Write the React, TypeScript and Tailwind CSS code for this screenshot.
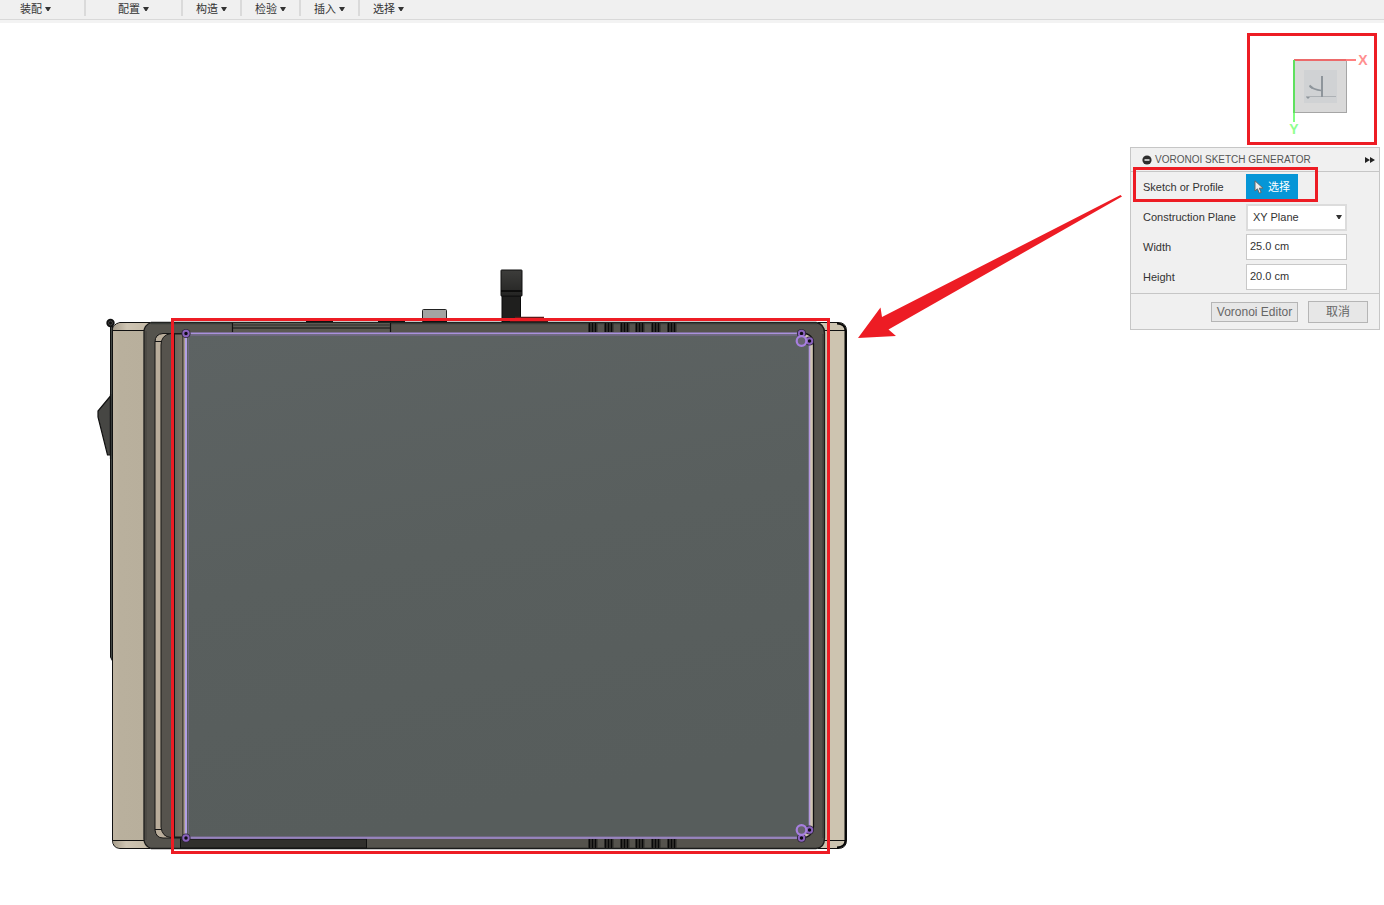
import React from "react";

const menus = [
  { label: "装配", box: "w-[86px] justify-start pl-5" },
  { label: "配置", box: "w-[97px] justify-center" },
  { label: "构造", box: "w-[59px] justify-center" },
  { label: "检验", box: "w-[59px] justify-center" },
  { label: "插入", box: "w-[59px] justify-center" },
  { label: "选择", box: "w-[59px] justify-center border-transparent!" },
];

const ventX = [588, 604, 620, 635, 651, 667];

function Caret() {
  return (
    <svg width="6" height="4" viewBox="0 0 6 4" aria-hidden="true">
      <path d="M0 0H6L3.6 4H2.4Z" fill="#333" />
    </svg>
  );
}

function Toolbar() {
  return (
    <header className="border-b-3 border-[#f3f3f3] bg-[#f0f0f0]">
      <nav className="flex h-5 items-start border-b border-[#d9d9d9]">
        {menus.map((m) => (
          <button
            key={m.label}
            className={`flex h-4 items-center gap-[3px] border-r-2 border-[#dadada] pt-0.5 text-[11px] leading-4 text-[#333] ${m.box}`}
          >
            {m.label}
            <Caret />
          </button>
        ))}
      </nav>
    </header>
  );
}

function Vents({ y, height }: { y: number; height: number }) {
  return (
    <g>
      {ventX.map((x) => (
        <g key={x}>
          <rect x={x} y={y} width="9.5" height={height} fill="#2d2c29" />
          <path
            d={`M${x + 1.5} ${y}v${height}M${x + 4.5} ${y}v${height}M${x + 7.5} ${y}v${height}`}
            stroke="#090909"
            strokeWidth="1"
          />
        </g>
      ))}
    </g>
  );
}

function Joint({ x, y }: { x: number; y: number }) {
  return (
    <g>
      <circle cx={x} cy={y} r="4.6" fill="#2f2739" />
      <circle cx={x} cy={y} r="2.7" fill="#0f0b14" stroke="#8a62bd" strokeWidth="1.9" />
    </g>
  );
}

function Model() {
  return (
    <svg
      className="block shrink-0"
      width="1130"
      height="882"
      viewBox="0 23 1130 882"
      role="img"
      aria-label="Model view"
    >
      <defs>
        <linearGradient id="face" x1="0" y1="0" x2="0.25" y2="1">
          <stop offset="0" stopColor="#5d6363" />
          <stop offset="0.5" stopColor="#595f5e" />
          <stop offset="1" stopColor="#575d5c" />
        </linearGradient>
        <linearGradient id="side">
          <stop offset="0" stopColor="#c0b5a2" />
          <stop offset="0.2" stopColor="#b9b09d" />
          <stop offset="1" stopColor="#b8af9c" />
        </linearGradient>
        <linearGradient id="cap">
          <stop offset="0" stopColor="#a89e8c" />
          <stop offset="0.4" stopColor="#cfc5b3" />
          <stop offset="1" stopColor="#c5bba8" />
        </linearGradient>
        <linearGradient id="rail">
          <stop offset="0" stopColor="#6b655b" />
          <stop offset="1" stopColor="#7b7367" />
        </linearGradient>
        <linearGradient id="plug" x1="0" y1="0" x2="0" y2="1">
          <stop offset="0" stopColor="#3d3d3b" />
          <stop offset="1" stopColor="#242423" />
        </linearGradient>
      </defs>

      {/* rear plate and knob */}
      <path d="M110.5 326V657l2 4V326Z" fill="#444946" stroke="#111" />
      <path d="M110.5 396L98 411v6l9.5 38h3Z" fill="#464643" stroke="#111" strokeWidth="1.2" />
      <path d="M110.5 394V459" stroke="#111" strokeWidth="1.2" />

      {/* connectors on the upper edge */}
      <rect x="422.5" y="309.5" width="24" height="13" rx="1" fill="#a3a4a2" stroke="#222" />
      <path d="M423 321.5h24" stroke="#111" strokeWidth="2" />
      <rect x="502" y="296" width="18.5" height="26" fill="#1f1f1e" stroke="#0a0a0a" />
      <rect x="501" y="270" width="21" height="26" rx="0.5" fill="url(#plug)" stroke="#111" />
      <path d="M501 291h21" stroke="#050505" strokeWidth="1.5" />
      <path d="M515 317.5h29M510 321.5h38" stroke="#5e1a1a" strokeWidth="1.5" />
      <path d="M306 321.5h27M378 321.5h27" stroke="#111" strokeWidth="2" />

      {/* side shells */}
      <path d="M150 322.5H120Q112.5 324 112.5 331V840Q112.5 848 120 848.5H150Z" fill="url(#side)" stroke="#111" />
      <path d="M148 323H120Q113 325 113 330H146Z" fill="url(#cap)" />
      <path d="M113 841H146V848H121Q114 847 113 841Z" fill="url(#cap)" />
      <path d="M113 330.5H144M113 840.5H144" stroke="#111" />
      <circle cx="110.5" cy="323" r="4.2" fill="#111" />
      <circle cx="110.5" cy="323" r="2" fill="none" stroke="#4a4a4a" strokeWidth="0.8" />
      <path d="M818 322.5H838Q846.5 322.5 846.5 331V840Q846.5 848.5 838 848.5H818Z" fill="#cdc4b0" stroke="#111" />
      <path d="M824 330.5H846M824 840.5H846" stroke="#111" />
      <path d="M837 323.5Q845.5 324 845.5 331V840Q845.5 847 837 847.5" fill="none" stroke="#080808" strokeWidth="2" />

      {/* frame */}
      <path
        d="M151 322.5H816Q824.5 324 824.5 333V838Q824.5 848 816 848.5H151Q144 846 144 839V332Q144 325 151 322.5Z"
        fill="#55534d"
        stroke="#1b1b1a"
        strokeWidth="1.3"
      />
      <path d="M151 323.5H817" stroke="#3b3d3a" strokeWidth="1.5" />
      <path d="M146 331V840" stroke="#44433f" />
      <path d="M823 334V838" stroke="#3d3c38" />

      {/* left recess */}
      <path d="M186 333.5H163Q155 334 155 342V830Q156 838 163 838H186Z" fill="#b9ad9b" stroke="#151515" />
      <path d="M155 341.5H161M155 829.5H161" stroke="#151515" />
      <path d="M183 333.5H171Q161 335 161 345V827Q162 837 171 837.5H183Z" fill="#56534d" stroke="#181817" />
      <rect x="174.5" y="334" width="8.5" height="503" fill="url(#rail)" stroke="#181817" />
      <rect x="183.5" y="334" width="2.5" height="504" fill="#a69a89" />

      {/* upper and lower slots */}
      <rect x="232.5" y="323" width="158" height="9" fill="#5b5952" />
      <path d="M232.5 323V332M390.5 323V332M233 328H390" stroke="#111" strokeWidth="1.2" />
      <path d="M233 325H390" stroke="#44433e" strokeWidth="2" />
      <rect x="180.5" y="839" width="186" height="9" fill="#31302d" stroke="#111" />
      <Vents y={323} height={9} />
      <Vents y={839} height={9} />

      {/* selected profile */}
      <path d="M801 333Q813 333 813.5 344V827Q812 838 801 838Z" fill="#cfc4b2" stroke="#111" strokeWidth="1.3" />
      <path d="M186 333.5H801Q803 341 809 341V830Q802 830 801 838H186Z" fill="url(#face)" />
      <path d="M186 332.5H801M188.5 335V836M188 335.5H797M188 836.5H797" stroke="#6e6680" strokeWidth="1" fill="none" />
      <path d="M186 838H801M186 333.5H801" stroke="#aa91db" strokeWidth="1.6" />
      <path d="M186 334V838" stroke="#b3a0e6" strokeWidth="2" />
      <path d="M809.5 342V830" stroke="#b397df" strokeWidth="1.6" />

      <Joint x={186} y={333.5} />
      <Joint x={186} y={838} />
      <Joint x={801.5} y={333.5} />
      <Joint x={809.5} y={341} />
      <Joint x={809.5} y={830} />
      <Joint x={801.5} y={838} />
      <circle cx="801.5" cy="341" r="4.8" fill="#676370" stroke="#a77fe0" strokeWidth="2.2" />
      <circle cx="801.5" cy="830" r="4.8" fill="#676370" stroke="#a77fe0" strokeWidth="2.2" />

      {/* callouts */}
      <rect x="172.5" y="319.5" width="656" height="533" fill="none" stroke="#ed1c24" strokeWidth="3" />
      <path d="M858 338L880.5 307.5L882 317L1120.5 195L1122 196.5L888.5 329.5L896 336Z" fill="#ed1c24" />
    </svg>
  );
}

function ViewCube() {
  return (
    <div className="mr-[3px] border-3 border-[#ed1c24]">
      <svg
        className="block text-[14px] font-bold"
        width="124"
        height="106"
        viewBox="1250 36 124 106"
        role="img"
        aria-label="View cube"
      >
        <rect x="1294.5" y="60.5" width="52" height="52" fill="#d9d9d9" stroke="#a5a5a5" />
        <rect x="1304" y="70" width="33" height="33" fill="#d0d2d4" />
        <path d="M1306 96.5H1336" stroke="#adb1b5" />
        <path d="M1322 76V97" stroke="#8e959b" strokeWidth="2" />
        <path d="M1310 86.5Q1314 89.5 1321 90.5" fill="none" stroke="#8e959b" strokeWidth="1.6" />
        <path d="M1309.5 85.5l3 2.5" stroke="#8e959b" strokeWidth="2" />
        <path d="M1306 97h4l-2 2Z" fill="#8e959b" />
        <path d="M1294 60H1346" stroke="#ec6a6a" strokeWidth="2" />
        <path d="M1346 60H1356" stroke="#ff8080" strokeWidth="2" />
        <path d="M1294 60V113" stroke="#5fe05f" strokeWidth="2" />
        <path d="M1294 113V122" stroke="#80ff80" strokeWidth="2" />
        <text x="1363" y="65" textAnchor="middle" fill="#ff8f8f" fontFamily="Liberation Sans Narrow, Liberation Sans, sans-serif">
          X
        </text>
        <text x="1294" y="134" textAnchor="middle" fill="#90ff90" fontFamily="Liberation Sans Narrow, Liberation Sans, sans-serif">
          Y
        </text>
      </svg>
    </div>
  );
}

function Field({ id, label, children }: { id: string; label: string; children: React.ReactNode }) {
  return (
    <div className="flex h-[30px] items-center">
      <label htmlFor={id} className="w-[103px] shrink-0">
        {label}
      </label>
      {children}
    </div>
  );
}

function GeneratorPanel() {
  const input = "h-[26px] w-[101px] border border-[#c8c8c8] bg-white px-[3px] pb-0.5 text-[11px] text-[#333] outline-none";
  return (
    <section className="w-[250px] border border-[#c6c6c6] bg-[#f0f0f0] text-[11px] text-[#333]">
      <div className="flex h-6 items-center border-b border-[#c6c6c6] pr-1 pl-[11px]">
        <button aria-label="Collapse" className="mr-[3px]">
          <svg className="block" width="10" height="10" viewBox="0 0 10 10">
            <circle cx="5" cy="5" r="4.6" fill="#2e2e2e" />
            <path d="M2.5 5h5" stroke="#fff" strokeWidth="1.4" />
          </svg>
        </button>
        <h1 className="flex-1 text-[10px] text-[#555]">VORONOI SKETCH GENERATOR</h1>
        <button aria-label="Expand">
          <svg className="block" width="10" height="6" viewBox="0 0 10 6">
            <path d="M0 0L5 3L0 6ZM5 0L10 3L5 6Z" fill="#222" />
          </svg>
        </button>
      </div>
      <div className="relative pl-3">
        <Field id="pick" label="Sketch or Profile">
          <button id="pick" className="flex h-[26px] w-[52px] items-center justify-center gap-1 bg-[#0696d7] text-white">
            <svg width="10" height="14" viewBox="0 0 10 14" aria-hidden="true">
              <path d="M1 .8V11L3.4 8.8L5.3 13.2L7.2 12.4L5.3 8.2H9Z" fill="#eee" stroke="#666" />
            </svg>
            选择
          </button>
        </Field>
        <Field id="plane" label="Construction Plane">
          <div className="grid items-center">
            <select
              id="plane"
              className="col-start-1 row-start-1 h-[27px] w-[101px] appearance-none border-2 border-[#dcdcdc] bg-white pl-[5px] text-[11px] text-[#333]"
            >
              <option>XY Plane</option>
            </select>
            <span className="pointer-events-none col-start-1 row-start-1 mr-[5px] flex justify-end">
              <Caret />
            </span>
          </div>
        </Field>
        <Field id="width" label="Width">
          <input id="width" className={input} defaultValue="25.0 cm" />
        </Field>
        <Field id="height" label="Height">
          <input id="height" className={input} defaultValue="20.0 cm" />
        </Field>
        <div className="pointer-events-none absolute -top-[5px] left-0.5 h-[35px] w-[185px] border-3 border-[#ed1c24]" />
      </div>
      <div className="mt-px flex h-9 items-center justify-end gap-2.5 border-t border-[#c6c6c6] pr-[11px] text-[12px] text-[#666]">
        <button className="h-5 w-[87px] border border-[#b5b5b5] bg-[#e7e7e7] leading-4 whitespace-nowrap">Voronoi Editor</button>
        <button className="h-[22px] w-[60px] border border-[#b5b5b5] bg-[#e7e7e7] leading-5">取消</button>
      </div>
    </section>
  );
}

export default function App() {
  return (
    <div className="min-h-screen overflow-x-hidden bg-white font-['Liberation_Sans','Noto_Sans_CJK_SC',sans-serif]">
      <Toolbar />
      <main className="flex justify-between">
        <Model />
        <aside className="mr-1 flex shrink-0 flex-col items-end gap-0.5 pt-2.5">
          <ViewCube />
          <GeneratorPanel />
        </aside>
      </main>
    </div>
  );
}
